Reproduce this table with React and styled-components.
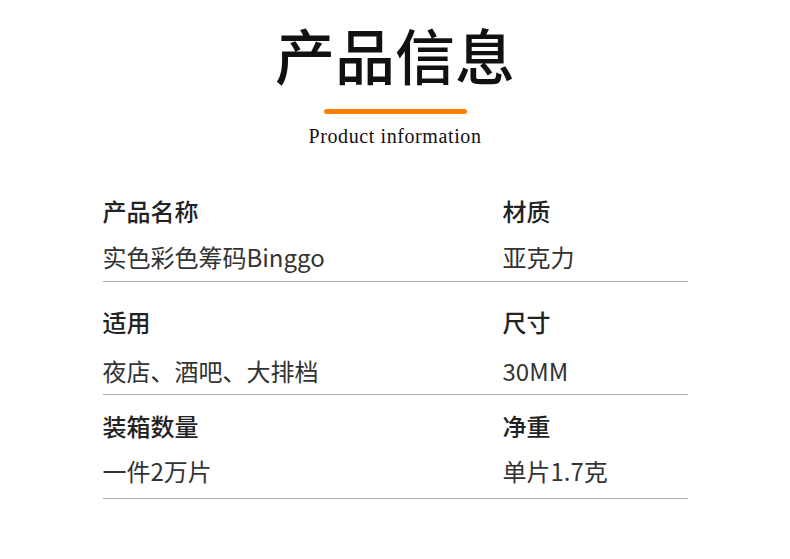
import React from "react";
import styled, { createGlobalStyle } from "styled-components";

const GlobalStyle = createGlobalStyle`
  html, body {
    margin: 0;
    padding: 0;
    background: #fff;
  }
  body {
    font-family: "Noto Sans CJK SC", "Noto Sans", sans-serif;
    color: #222;
  }
`;

const Page = styled.div`
  width: 790px;
  height: 559px;
  background: #fff;
  overflow: hidden;
`;

const Header = styled.header`
  display: flex;
  flex-direction: column;
  align-items: center;
  padding-top: 24px;
`;

const Title = styled.h1`
  margin: 0;
  font-family: "Noto Sans CJK SC", sans-serif;
  font-size: 60px;
  line-height: 60px;
  font-weight: 500;
  color: #111;
`;

const Bar = styled.div`
  width: 143px;
  height: 5px;
  margin-top: 25px;
  border-radius: 3px;
  background: #ff8000;
`;

const Subtitle = styled.div`
  margin-top: 10px;
  font-family: "Liberation Serif", serif;
  font-size: 20px;
  line-height: 24px;
  letter-spacing: 0.6px;
  color: #111;
`;

const Table = styled.div`
  width: 585px;
  margin: 0 auto;
  padding-top: 47px;
`;

const Row = styled.div`
  display: grid;
  grid-template-columns: 400px 1fr;
  padding-top: ${p => p.top}px;
  padding-bottom: ${p => p.bottom}px;
  border-bottom: 1px solid #aaa;
`;

const Cell = styled.div`
  display: flex;
  flex-direction: column;
  gap: ${p => p.gap}px;
`;

const Label = styled.div`
  font-size: 24px;
  line-height: 32px;
  font-weight: 500;
  color: #222;
`;

const Value = styled.div`
  font-size: 24px;
  line-height: 32px;
  font-weight: 400;
  color: #333;
`;

const rows = [
  { top: 0, gap: 14, bottom: 8, items: [["产品名称", "实色彩色筹码Binggo"], ["材质", "亚克力"]] },
  { top: 24, gap: 17, bottom: 7, items: [["适用", "夜店、酒吧、大排档"], ["尺寸", "30MM"]] },
  { top: 15, gap: 13, bottom: 11, items: [["装箱数量", "一件2万片"], ["净重", "单片1.7克"]] },
];

export default function App() {
  return (
    <Page>
      <GlobalStyle />
      <Header>
        <Title>产品信息</Title>
        <Bar />
        <Subtitle>Product information</Subtitle>
      </Header>
      <Table>
        {rows.map((row, i) => (
          <Row key={i} top={row.top} bottom={row.bottom}>
            {row.items.map(([label, value]) => (
              <Cell key={label} gap={row.gap}>
                <Label>{label}</Label>
                <Value>{value}</Value>
              </Cell>
            ))}
          </Row>
        ))}
      </Table>
    </Page>
  );
}
